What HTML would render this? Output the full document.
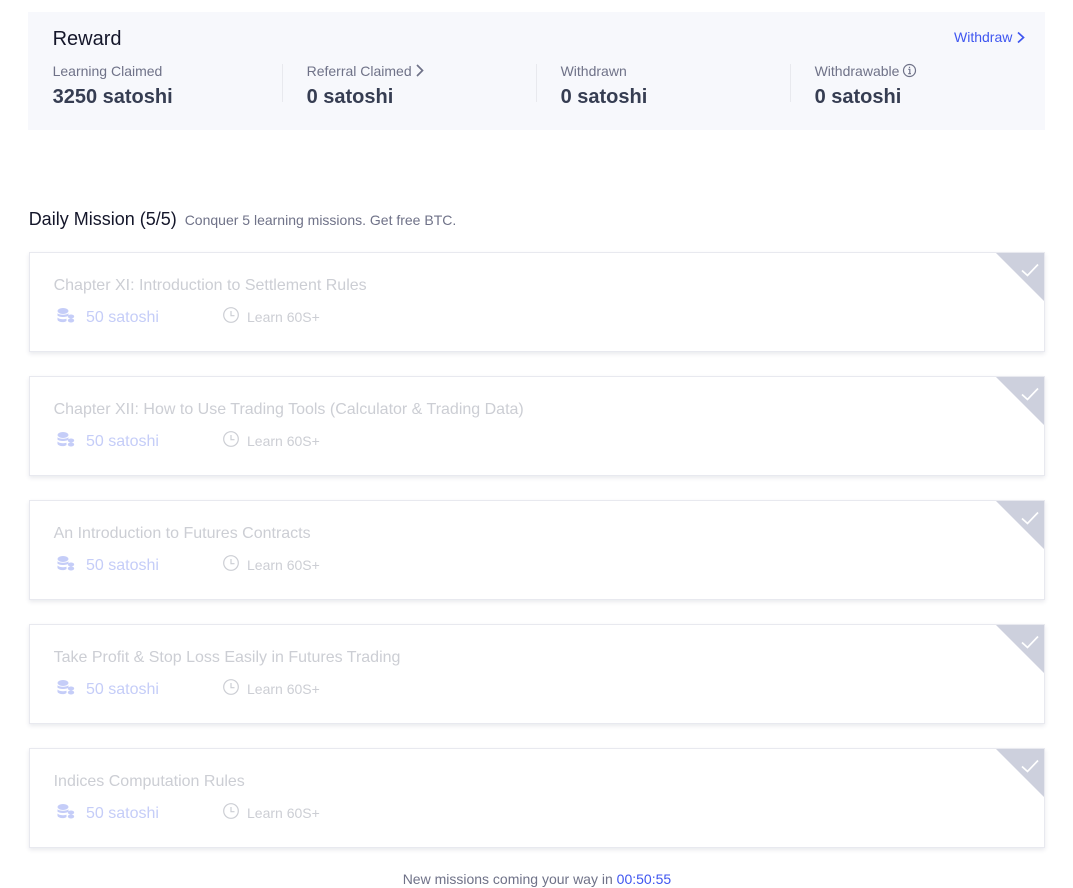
<!DOCTYPE html>
<html>
<head>
<meta charset="utf-8">
<style>
html,body{margin:0;padding:0;background:#fff;width:1073px;height:886px;overflow:hidden;font-family:"Liberation Sans",Arial,sans-serif;}
.a{position:absolute;white-space:nowrap;}
#box{position:absolute;left:28px;top:12px;width:1017px;height:118px;background:#f7f8fc;}
.lab{font-size:14px;line-height:18px;color:#6f7288;top:62px;}
.val{font-size:20px;line-height:24px;font-weight:bold;color:#363d52;top:85px;}
.div{position:absolute;top:64px;width:1px;height:38px;background:#e8e9ee;}
.card{position:absolute;left:29px;width:1014px;height:98px;background:#fff;border:1px solid #e8e9ef;box-shadow:0 2px 4px rgba(40,50,90,.1);}
.t{position:absolute;left:23.6px;top:23px;font-size:16px;line-height:20px;color:#ccced4;white-space:nowrap;}
.s{position:absolute;left:56px;top:55px;font-size:16px;line-height:20px;color:#c5cdf8;white-space:nowrap;}
.l{position:absolute;left:217px;top:54px;font-size:14px;line-height:20px;color:#ccced4;white-space:nowrap;}
.card svg{position:absolute;}
</style>
</head>
<body>
<div id="box"></div>
<div class="a" style="left:52.6px;top:27px;font-size:20px;line-height:24px;color:#14162a;">Reward</div>
<div class="a" style="left:954px;top:28px;font-size:14px;line-height:18px;color:#3f56f0;">Withdraw</div>
<svg class="a" style="left:1016px;top:31px" width="10" height="13" viewBox="0 0 10 13"><path d="M2 1.500L7.500 6.500L2 11.500" fill="none" stroke="#3f56f0" stroke-width="1.700"/></svg>

<div class="a lab" style="left:52.6px">Learning Claimed</div>
<div class="a val" style="left:52.6px">3250 satoshi</div>
<div class="div" style="left:282px"></div>
<div class="a lab" style="left:306.6px">Referral Claimed</div>
<svg class="a" style="left:415px;top:64px" width="10" height="13" viewBox="0 0 10 13"><path d="M2 1L7.500 6.500L2 12" fill="none" stroke="#6f7288" stroke-width="1.700"/></svg>
<div class="a val" style="left:306.6px">0 satoshi</div>
<div class="div" style="left:536px"></div>
<div class="a lab" style="left:560.6px">Withdrawn</div>
<div class="a val" style="left:560.6px">0 satoshi</div>
<div class="div" style="left:790px"></div>
<div class="a lab" style="left:814.6px">Withdrawable</div>
<svg class="a" style="left:902px;top:63px" width="15" height="15" viewBox="0 0 15 15"><circle cx="7.500" cy="7.500" r="6" fill="none" stroke="#6f7288" stroke-width="1.200"/><path d="M6.300 6.300H7.800V10.600M6.200 10.700H9M7.500 3.800V5" fill="none" stroke="#6f7288" stroke-width="1.200"/></svg>
<div class="a val" style="left:814.6px">0 satoshi</div>

<div class="a" style="left:28.7px;top:208px;font-size:18px;line-height:22px;color:#14162a;">Daily Mission (5/5)</div>
<div class="a" style="left:184.7px;top:211px;font-size:14px;line-height:18px;color:#6f7288;">Conquer 5 learning missions. Get free BTC.</div>

<div class="card" style="top:252px">
<div class="t">Chapter XI: Introduction to Settlement Rules</div>
<svg style="left:27px;top:55px" width="18" height="16" viewBox="0 0 18 16"><g fill="#c5cdf8"><ellipse cx="6" cy="3" rx="5.500" ry="3"/><path d="M.5 5.200C2 7.200 10 7.200 11.500 5.200V7.500C10 9.500 2 9.500 .5 7.500Z"/><path d="M.5 9.500C2 11.500 8 11.500 9.500 10.800V13C7.500 14.800 2 14.500 .5 12Z"/><ellipse cx="14" cy="8.500" rx="3.200" ry="2"/><ellipse cx="14" cy="12.500" rx="3.200" ry="2"/></g></svg>
<div class="s">50 satoshi</div>
<svg style="left:193px;top:54px" width="16" height="16" viewBox="0 0 16 16"><circle cx="8" cy="8" r="7.300" fill="none" stroke="#ccced4" stroke-width="1.200"/><path d="M8 4V8.700H11.500" fill="none" stroke="#ccced4" stroke-width="1.200"/></svg>
<div class="l">Learn 60S+</div>
<svg style="left:966px;top:0" width="48" height="48" viewBox="0 0 48 48"><path d="M0 0H48V48Z" fill="#cdd0dd"/><path d="M26 17.500L31.500 22.500L42 11.500" fill="none" stroke="#fff" stroke-width="1.700"/></svg>
</div>

<div class="card" style="top:376px">
<div class="t">Chapter XII: How to Use Trading Tools (Calculator &amp; Trading Data)</div>
<svg style="left:27px;top:55px" width="18" height="16" viewBox="0 0 18 16"><g fill="#c5cdf8"><ellipse cx="6" cy="3" rx="5.500" ry="3"/><path d="M.5 5.200C2 7.200 10 7.200 11.500 5.200V7.500C10 9.500 2 9.500 .5 7.500Z"/><path d="M.5 9.500C2 11.500 8 11.500 9.500 10.800V13C7.500 14.800 2 14.500 .5 12Z"/><ellipse cx="14" cy="8.500" rx="3.200" ry="2"/><ellipse cx="14" cy="12.500" rx="3.200" ry="2"/></g></svg>
<div class="s">50 satoshi</div>
<svg style="left:193px;top:54px" width="16" height="16" viewBox="0 0 16 16"><circle cx="8" cy="8" r="7.300" fill="none" stroke="#ccced4" stroke-width="1.200"/><path d="M8 4V8.700H11.500" fill="none" stroke="#ccced4" stroke-width="1.200"/></svg>
<div class="l">Learn 60S+</div>
<svg style="left:966px;top:0" width="48" height="48" viewBox="0 0 48 48"><path d="M0 0H48V48Z" fill="#cdd0dd"/><path d="M26 17.500L31.500 22.500L42 11.500" fill="none" stroke="#fff" stroke-width="1.700"/></svg>
</div>

<div class="card" style="top:500px">
<div class="t">An Introduction to Futures Contracts</div>
<svg style="left:27px;top:55px" width="18" height="16" viewBox="0 0 18 16"><g fill="#c5cdf8"><ellipse cx="6" cy="3" rx="5.500" ry="3"/><path d="M.5 5.200C2 7.200 10 7.200 11.500 5.200V7.500C10 9.500 2 9.500 .5 7.500Z"/><path d="M.5 9.500C2 11.500 8 11.500 9.500 10.800V13C7.500 14.800 2 14.500 .5 12Z"/><ellipse cx="14" cy="8.500" rx="3.200" ry="2"/><ellipse cx="14" cy="12.500" rx="3.200" ry="2"/></g></svg>
<div class="s">50 satoshi</div>
<svg style="left:193px;top:54px" width="16" height="16" viewBox="0 0 16 16"><circle cx="8" cy="8" r="7.300" fill="none" stroke="#ccced4" stroke-width="1.200"/><path d="M8 4V8.700H11.500" fill="none" stroke="#ccced4" stroke-width="1.200"/></svg>
<div class="l">Learn 60S+</div>
<svg style="left:966px;top:0" width="48" height="48" viewBox="0 0 48 48"><path d="M0 0H48V48Z" fill="#cdd0dd"/><path d="M26 17.500L31.500 22.500L42 11.500" fill="none" stroke="#fff" stroke-width="1.700"/></svg>
</div>

<div class="card" style="top:624px">
<div class="t">Take Profit &amp; Stop Loss Easily in Futures Trading</div>
<svg style="left:27px;top:55px" width="18" height="16" viewBox="0 0 18 16"><g fill="#c5cdf8"><ellipse cx="6" cy="3" rx="5.500" ry="3"/><path d="M.5 5.200C2 7.200 10 7.200 11.500 5.200V7.500C10 9.500 2 9.500 .5 7.500Z"/><path d="M.5 9.500C2 11.500 8 11.500 9.500 10.800V13C7.500 14.800 2 14.500 .5 12Z"/><ellipse cx="14" cy="8.500" rx="3.200" ry="2"/><ellipse cx="14" cy="12.500" rx="3.200" ry="2"/></g></svg>
<div class="s">50 satoshi</div>
<svg style="left:193px;top:54px" width="16" height="16" viewBox="0 0 16 16"><circle cx="8" cy="8" r="7.300" fill="none" stroke="#ccced4" stroke-width="1.200"/><path d="M8 4V8.700H11.500" fill="none" stroke="#ccced4" stroke-width="1.200"/></svg>
<div class="l">Learn 60S+</div>
<svg style="left:966px;top:0" width="48" height="48" viewBox="0 0 48 48"><path d="M0 0H48V48Z" fill="#cdd0dd"/><path d="M26 17.500L31.500 22.500L42 11.500" fill="none" stroke="#fff" stroke-width="1.700"/></svg>
</div>

<div class="card" style="top:748px">
<div class="t">Indices Computation Rules</div>
<svg style="left:27px;top:55px" width="18" height="16" viewBox="0 0 18 16"><g fill="#c5cdf8"><ellipse cx="6" cy="3" rx="5.500" ry="3"/><path d="M.5 5.200C2 7.200 10 7.200 11.500 5.200V7.500C10 9.500 2 9.500 .5 7.500Z"/><path d="M.5 9.500C2 11.500 8 11.500 9.500 10.800V13C7.500 14.800 2 14.500 .5 12Z"/><ellipse cx="14" cy="8.500" rx="3.200" ry="2"/><ellipse cx="14" cy="12.500" rx="3.200" ry="2"/></g></svg>
<div class="s">50 satoshi</div>
<svg style="left:193px;top:54px" width="16" height="16" viewBox="0 0 16 16"><circle cx="8" cy="8" r="7.300" fill="none" stroke="#ccced4" stroke-width="1.200"/><path d="M8 4V8.700H11.500" fill="none" stroke="#ccced4" stroke-width="1.200"/></svg>
<div class="l">Learn 60S+</div>
<svg style="left:966px;top:0" width="48" height="48" viewBox="0 0 48 48"><path d="M0 0H48V48Z" fill="#cdd0dd"/><path d="M26 17.500L31.500 22.500L42 11.500" fill="none" stroke="#fff" stroke-width="1.700"/></svg>
</div>

<div class="a" style="left:402.7px;top:870px;font-size:14px;line-height:18px;color:#6f7288;">New missions coming your way in <span style="color:#3f56f0">00:50:55</span></div>
</body>
</html>
